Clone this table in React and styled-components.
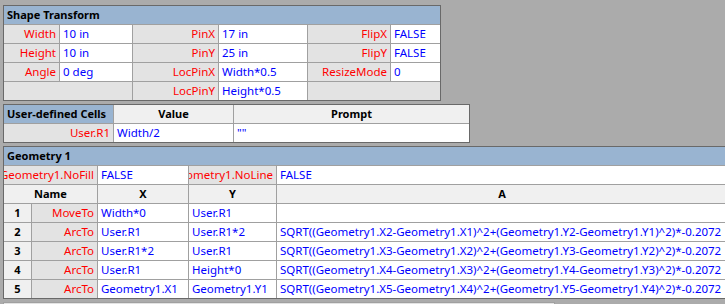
import React from "react";
import styled, { createGlobalStyle } from "styled-components";

const GlobalStyle = createGlobalStyle`
  html, body { margin: 0; padding: 0; }
  body {
    background: #ababab;
    width: 725px;
    height: 304px;
    overflow: hidden;
    font-family: "Noto Sans", "Open Sans", sans-serif;
    font-size: 11.5px;
  }
`;

const Page = styled.div`
  display: flex;
  flex-direction: column;
  align-items: flex-start;
  gap: 3px;
  padding: 5px 0 0 3px;
`;

const Sheet = styled.div`
  display: grid;
  grid-template-columns: ${(p) => p.$cols};
  grid-auto-rows: 18px;
  gap: 1px;
  background: #a0a0a0;
  border: 1px solid #696969;
  flex-shrink: 0;
`;

const bg = {
  title: "#99b4d1",
  label: "#e3e3e3",
  value: "#ffffff",
  head: "#f0f0f0",
  num: "#f0f0f0",
  blank: "#e3e3e3",
};

const fg = {
  title: "#000000",
  label: "#ff0000",
  value: "#0000ff",
  head: "#000000",
  num: "#000000",
  blank: "#000000",
};

const align = {
  label: "flex-end",
  head: "center",
  num: "center",
};

const Cell = styled.div.attrs((p) => ({ $kind: p.$kind || "value" }))`
  grid-column: span ${(p) => p.$span || 1};
  background: ${(p) => bg[p.$kind]};
  color: ${(p) => fg[p.$kind]};
  display: flex;
  align-items: center;
  justify-content: ${(p) => align[p.$kind] || "flex-start"};
  overflow: hidden;
  white-space: nowrap;
  line-height: 18px;
  padding: 0 3px;
  font-weight: ${(p) => (p.$kind === "title" || p.$kind === "head" || p.$kind === "num" ? 700 : 400)};
  font-size: ${(p) => (p.$kind === "title" || p.$kind === "head" || p.$kind === "num" ? "11px" : "11.5px")};
`;

const Title = styled(Cell)`
  grid-column: ${(p) => (p.$full ? "1 / -1" : "auto")};
`;

const Strip = styled.div`
  width: 550px;
  height: 10px;
  background: #e3e3e3;
  border: 1px solid #a0a0a0;
  border-bottom: none;
`;

const transform = [
  ["Width", "10 in", "PinX", "17 in", "FlipX", "FALSE"],
  ["Height", "10 in", "PinY", "25 in", "FlipY", "FALSE"],
  ["Angle", "0 deg", "LocPinX", "Width*0.5", "ResizeMode", "0"],
];

const geometry = [
  ["1", "MoveTo", "Width*0", "User.R1", ""],
  ["2", "ArcTo", "User.R1", "User.R1*2", "SQRT((Geometry1.X2-Geometry1.X1)^2+(Geometry1.Y2-Geometry1.Y1)^2)*-0.2072"],
  ["3", "ArcTo", "User.R1*2", "User.R1", "SQRT((Geometry1.X3-Geometry1.X2)^2+(Geometry1.Y3-Geometry1.Y2)^2)*-0.2072"],
  ["4", "ArcTo", "User.R1", "Height*0", "SQRT((Geometry1.X4-Geometry1.X3)^2+(Geometry1.Y4-Geometry1.Y3)^2)*-0.2072"],
  ["5", "ArcTo", "Geometry1.X1", "Geometry1.Y1", "SQRT((Geometry1.X5-Geometry1.X4)^2+(Geometry1.Y5-Geometry1.Y4)^2)*-0.2072"],
];

export default function App() {
  return (
    <>
      <GlobalStyle />
      <Page>
        <Sheet $cols="55px 72px 85px 88px 82px 49px">
          <Title $kind="title" $full>Shape Transform</Title>
          {transform.map((r) => (
            <React.Fragment key={r[0]}>
              <Cell $kind="label">{r[0]}</Cell>
              <Cell>{r[1]}</Cell>
              <Cell $kind="label">{r[2]}</Cell>
              <Cell>{r[3]}</Cell>
              <Cell $kind="label">{r[4]}</Cell>
              <Cell>{r[5]}</Cell>
            </React.Fragment>
          ))}
          <Cell $kind="blank" $span={2} />
          <Cell $kind="label">LocPinY</Cell>
          <Cell>Height*0.5</Cell>
          <Cell $kind="blank" $span={2} />
        </Sheet>

        <Sheet $cols="109px 119px 235px">
          <Title $kind="title">User-defined Cells</Title>
          <Cell $kind="head">Value</Cell>
          <Cell $kind="head">Prompt</Cell>
          <Cell $kind="label">User.R1</Cell>
          <Cell>Width/2</Cell>
          <Cell>""</Cell>
        </Sheet>

        <Sheet $cols="27px 65px 90px 87px 450px">
          <Title $kind="title" $full>Geometry 1</Title>
          <Cell $kind="label" $span={2}>Geometry1.NoFill</Cell>
          <Cell>FALSE</Cell>
          <Cell $kind="label">Geometry1.NoLine</Cell>
          <Cell>FALSE</Cell>
          <Cell $kind="head" $span={2}>Name</Cell>
          <Cell $kind="head">X</Cell>
          <Cell $kind="head">Y</Cell>
          <Cell $kind="head">A</Cell>
          {geometry.map((r) => (
            <React.Fragment key={r[0]}>
              <Cell $kind="num">{r[0]}</Cell>
              <Cell $kind="label">{r[1]}</Cell>
              <Cell>{r[2]}</Cell>
              <Cell>{r[3]}</Cell>
              <Cell>{r[4]}</Cell>
            </React.Fragment>
          ))}
        </Sheet>
        <Strip />
      </Page>
    </>
  );
}
